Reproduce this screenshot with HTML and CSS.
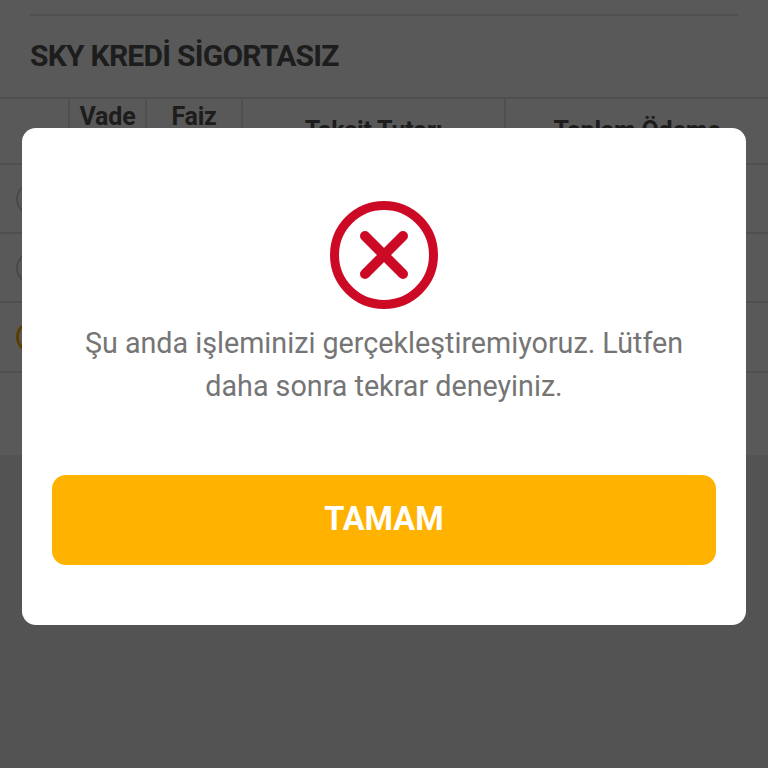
FILE: index.html
```html
<!DOCTYPE html>
<html lang="tr">
<head>
    <meta charset="UTF-8">
    <meta name="viewport" content="width=device-width, initial-scale=1.0">
    <title>Sky Kredi</title>
    <link rel="stylesheet" href="styles.css">
</head>
<body>
    <div class="page">
        <section class="loan">
            <hr class="divider">
            <h2 class="loan-title">SKY KREDİ SİGORTASIZ</h2>
            <div class="plans">
                <div class="plan-row plan-head">
                    <div class="cell"></div>
                    <div class="cell cell-top">Vade<br>(Ay)</div>
                    <div class="cell cell-top">Faiz<br>Oranı</div>
                    <div class="cell">Taksit Tutarı</div>
                    <div class="cell">Toplam Ödeme</div>
                </div>
                <div class="plan-row">
                    <div class="cell"><span class="radio"></span></div>
                    <div class="cell"></div><div class="cell"></div><div class="cell"></div><div class="cell"></div>
                </div>
                <div class="plan-row">
                    <div class="cell"><span class="radio"></span></div>
                    <div class="cell"></div><div class="cell"></div><div class="cell"></div><div class="cell"></div>
                </div>
                <div class="plan-row plan-last">
                    <div class="cell"><span class="radio radio-on"></span></div>
                    <div class="cell"></div><div class="cell"></div><div class="cell"></div><div class="cell"></div>
                </div>
            </div>
        </section>
    </div>

    <div class="overlay">
        <div class="dialog">
            <svg class="dialog-icon" viewBox="0 0 108 108" width="108" height="108">
                <circle cx="54" cy="54" r="49.5" fill="none" stroke="#cc0a26" stroke-width="9"/>
                <path d="M35 35 L73 73 M73 35 L35 73" fill="none" stroke="#cc0a26" stroke-width="10" stroke-linecap="round"/>
            </svg>
            <p class="dialog-text">Şu anda işleminizi gerçekleştiremiyoruz. Lütfen daha sonra tekrar deneyiniz.</p>
            <button class="dialog-button">TAMAM</button>
        </div>
    </div>
</body>
</html>
```

FILE: styles.css
```css
* {
    box-sizing: border-box;
}

html, body {
    height: 100%;
}

body {
    margin: 0;
    font-family: Roboto, "Liberation Sans", sans-serif;
    background: #eee;
    overflow: hidden;
}

.page {
    height: 100%;
}

.loan {
    height: 455px;
    padding-top: 14px;
    background: #fff;
}

.divider {
    height: 2px;
    margin: 0 30px;
    border: none;
    background: #e6e6e6;
}

.loan-title {
    margin: 0;
    padding: 22px 30px 0;
    height: 81px;
    font-size: 30px;
    line-height: 36px;
    font-weight: 700;
    letter-spacing: -0.75px;
    color: #555;
}

.plans {
    border-top: 2px solid #e2e2e2;
}

.plan-row {
    display: grid;
    grid-template-columns: 68px 77px 96px 263px 264px;
    height: 69px;
    border-bottom: 2px solid #e2e2e2;
}

.plan-head {
    height: 66px;
}

.plan-last {
    height: 70px;
}

.cell {
    display: flex;
    align-items: center;
    justify-content: center;
    border-left: 2px solid #e2e2e2;
    font-size: 25px;
    line-height: 30px;
    font-weight: 700;
    letter-spacing: -0.2px;
    color: #555;
    text-align: center;
}

.cell:first-child {
    border-left: none;
    justify-content: flex-start;
    padding-left: 16px;
}

.cell-top {
    align-items: flex-start;
    padding-top: 3px;
}

.radio {
    width: 32px;
    height: 32px;
    border: 2px solid #d0d0d0;
    border-radius: 50%;
}

.radio-on {
    border: 3px solid #ffb300;
}

.overlay {
    position: fixed;
    inset: 0;
    display: flex;
    align-items: flex-start;
    justify-content: center;
    padding-top: 128px;
    background: rgba(0, 0, 0, 0.65);
}

.dialog {
    display: flex;
    flex-direction: column;
    align-items: center;
    width: 724px;
    height: 497px;
    padding: 73px 30px 0;
    background: #fff;
    border-radius: 14px;
}

.dialog-icon {
    flex: none;
}

.dialog-text {
    width: 100%;
    margin: 13px 0 0;
    padding: 0 20px;
    font-size: 28.7px;
    line-height: 43px;
    color: #757575;
    text-align: center;
}

.dialog-button {
    width: 100%;
    height: 90px;
    margin-top: 67px;
    padding: 0 0 2px;
    border: none;
    border-radius: 14px;
    background: #ffb300;
    color: #fff;
    font-family: inherit;
    font-size: 32.5px;
    font-weight: 700;
}
```
